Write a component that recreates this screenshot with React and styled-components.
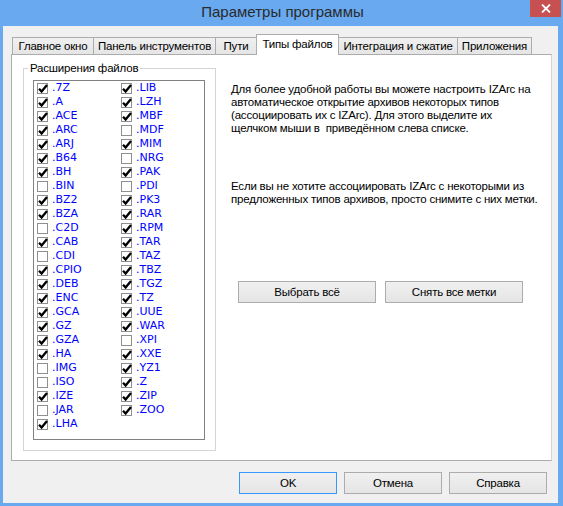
import React from "react";
import styled, { createGlobalStyle } from "styled-components";

const GlobalStyle = createGlobalStyle`
  html, body {
    margin: 0;
    padding: 0;
    background: #68a9f0;
  }
  * {
    box-sizing: border-box;
  }
`;

const extensions = [
  [".7Z", true], [".A", true], [".ACE", true], [".ARC", true], [".ARJ", true],
  [".B64", true], [".BH", true], [".BIN", false], [".BZ2", true], [".BZA", true],
  [".C2D", false], [".CAB", true], [".CDI", false], [".CPIO", true], [".DEB", true],
  [".ENC", true], [".GCA", true], [".GZ", true], [".GZA", true], [".HA", true],
  [".IMG", false], [".ISO", false], [".IZE", true], [".JAR", false], [".LHA", true],
  [".LIB", true], [".LZH", true], [".MBF", true], [".MDF", false], [".MIM", true],
  [".NRG", false], [".PAK", true], [".PDI", false], [".PK3", true], [".RAR", true],
  [".RPM", true], [".TAR", true], [".TAZ", true], [".TBZ", true], [".TGZ", true],
  [".TZ", true], [".UUE", true], [".WAR", true], [".XPI", false], [".XXE", true],
  [".YZ1", true], [".Z", true], [".ZIP", true], [".ZOO", true],
];

const tabs = [
  { label: "Главное окно", width: 82 },
  { label: "Панель инструментов", width: 123 },
  { label: "Пути", width: 42 },
  { label: "Типы файлов", width: 83, active: true },
  { label: "Интеграция и сжатие", width: 120 },
  { label: "Приложения", width: 75 },
];

const App = () => {
  return (
    <>
      <GlobalStyle />
      <Window>
        <TitleBar>
          <span />
          <Title>Параметры программы</Title>
          <CloseButton>
            <svg width="10" height="9" viewBox="0 0 10 9">
              <path d="M1 0.5 L9 8.5 M9 0.5 L1 8.5" stroke="#fff" strokeWidth="1.8" />
            </svg>
          </CloseButton>
        </TitleBar>
        <Client>
          <TabStrip>
            {tabs.map((t) => (
              <Tab key={t.label} $active={t.active} $width={t.width}>
                {t.label}
              </Tab>
            ))}
          </TabStrip>
          <Pane>
            <GroupBox>
              <Legend>Расширения файлов</Legend>
              <ListBox>
                {extensions.map(([name, checked]) => (
                  <Item key={name}>
                    <Box>
                      {checked && (
                        <svg width="12" height="12" viewBox="0 0 12 12">
                          <path
                            d="M2 5.8 L4.6 8.6 L10 2"
                            fill="none"
                            stroke="#000"
                            strokeWidth="2.3"
                          />
                        </svg>
                      )}
                    </Box>
                    <Ext>{name}</Ext>
                  </Item>
                ))}
              </ListBox>
            </GroupBox>
            <Side>
              <Text>
                Для более удобной работы вы можете настроить IZArc на
                <br />
                автоматическое открытие архивов некоторых типов
                <br />
                (ассоциировать их с IZArc). Для этого выделите их
                <br />
                щелчком мыши в&nbsp; приведённом слева списке.
              </Text>
              <Text $gap={45}>
                Если вы не хотите ассоциировать IZArc с некоторыми из
                <br />
                предложенных типов архивов, просто снимите с них метки.
              </Text>
              <ActionRow>
                <Button $width={138}>Выбрать всё</Button>
                <Button $width={138}>Снять все метки</Button>
              </ActionRow>
            </Side>
          </Pane>
          <Footer>
            <Button $width={98} $default>OK</Button>
            <Button $width={98}>Отмена</Button>
            <Button $width={98}>Справка</Button>
          </Footer>
        </Client>
      </Window>
    </>
  );
};

const Window = styled.div`
  width: 563px;
  height: 506px;
  background: #68a9f0;
  display: flex;
  flex-direction: column;
  font-family: "Liberation Sans", Arial, sans-serif;
  font-size: 11.5px;
  letter-spacing: -0.2px;
  color: #000;
`;

const TitleBar = styled.div`
  height: 26px;
  display: grid;
  grid-template-columns: 1fr auto 1fr;
  align-items: start;
`;

const Title = styled.div`
  font-size: 15px;
  letter-spacing: 0;
  line-height: 24px;
  color: #2a2a2a;
  margin-left: 2px;
`;

const CloseButton = styled.div`
  justify-self: end;
  width: 31px;
  height: 17px;
  margin-right: 2px;
  background: #c75050;
  display: flex;
  align-items: center;
  justify-content: center;
`;

const Client = styled.div`
  flex: 1;
  margin: 0 5px 3px 3px;
  background: #f0f0f0;
  padding: 8px 6px 9px 8px;
  display: flex;
  flex-direction: column;
`;

const TabStrip = styled.div`
  height: 20px;
  display: flex;
  align-items: flex-end;
  padding-left: 1px;
`;

const Tab = styled.div`
  position: relative;
  flex-shrink: 0;
  width: ${(p) => p.$width}px;
  height: ${(p) => (p.$active ? 21 : 17)}px;
  margin-left: -1px;
  margin-bottom: ${(p) => (p.$active ? -1 : 0)}px;
  z-index: ${(p) => (p.$active ? 2 : 1)};
  border: 1px solid #acacac;
  border-bottom: none;
  background: ${(p) =>
    p.$active ? "#fff" : "linear-gradient(#f0f0f0, #e5e5e5)"};
  display: flex;
  align-items: center;
  justify-content: center;
  white-space: nowrap;
  line-height: 14px;
  padding-bottom: ${(p) => (p.$active ? 3 : 0)}px;
  &:first-child {
    margin-left: 0;
  }
`;

const Pane = styled.div`
  height: 407px;
  background: #fff;
  border: 1px solid #acacac;
  border-right-color: #d5d5d5;
  padding: 13px 0 0 11px;
  display: flex;
  align-items: flex-start;
`;

const GroupBox = styled.div`
  position: relative;
  flex: 0 0 193px;
  width: 193px;
  height: 383px;
  padding: 11px 10px 10px 9px;
  border: 1px solid #d5d5d5;
`;

const Legend = styled.span`
  position: absolute;
  top: -8px;
  left: 4px;
  padding: 0 2px;
  background: #fff;
  line-height: 14px;
  white-space: nowrap;
`;

const ListBox = styled.div`
  width: 172px;
  height: 360px;
  border: 1px solid #828282;
  padding: 0 0 0 3px;
  display: grid;
  grid-auto-flow: column;
  grid-template-rows: repeat(25, 14px);
  grid-template-columns: 84px 84px;
  align-content: start;
`;

const Item = styled.div`
  display: flex;
  align-items: center;
  gap: 4px;
`;

const Box = styled.div`
  width: 11px;
  height: 11px;
  border: 1px solid #8f8f8f;
  background: #fff;
  position: relative;
  flex-shrink: 0;
  svg {
    position: absolute;
    left: -1px;
    top: -1px;
  }
`;

const Ext = styled.span`
  font-family: "DejaVu Sans", Verdana, sans-serif;
  font-size: 11px;
  letter-spacing: 0;
  color: #0000ff;
  line-height: 14px;
`;

const Side = styled.div`
  margin-left: 15px;
  margin-top: -7px;
  padding-top: 22px;
  display: flex;
  flex-direction: column;
`;

const Text = styled.p`
  margin: ${(p) => p.$gap || 0}px 0 0 0;
  line-height: 13px;
  white-space: nowrap;
`;

const ActionRow = styled.div`
  margin-top: 75px;
  padding-left: 7px;
  display: flex;
  gap: 9px;
`;

const Button = styled.div`
  width: ${(p) => p.$width}px;
  height: 22px;
  border: 1px solid ${(p) => (p.$default ? "#3399ff" : "#acacac")};
  background: linear-gradient(#f0f0f0, #e5e5e5);
  display: flex;
  align-items: center;
  justify-content: center;
  line-height: 14px;
`;

const Footer = styled.div`
  margin-top: 11px;
  padding-right: 5px;
  display: flex;
  justify-content: flex-end;
  gap: 7px;
`;

export default App;
